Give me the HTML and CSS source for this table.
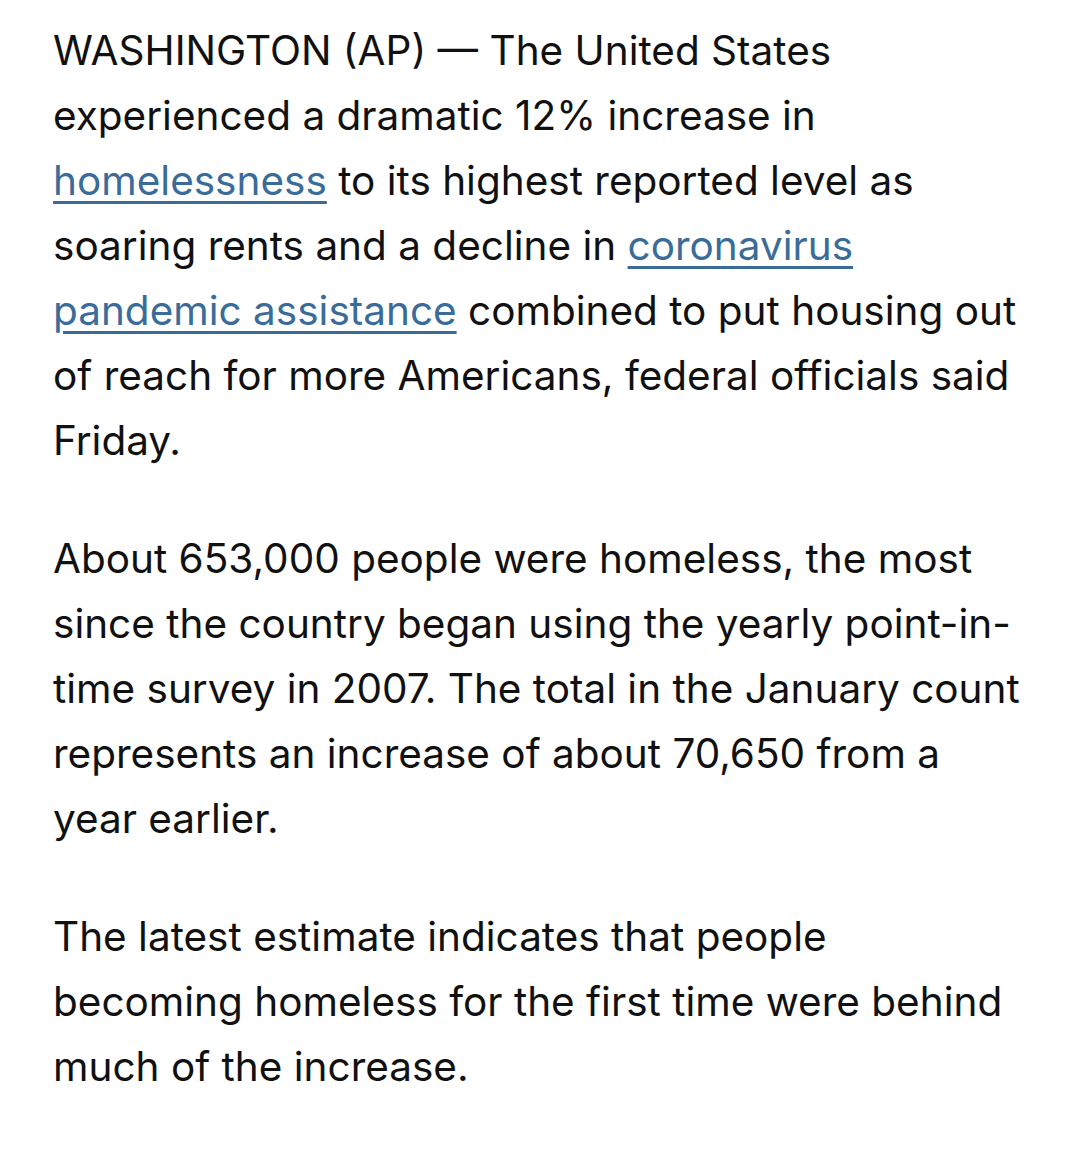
FILE: index.html
```html
<!DOCTYPE html>
<html lang="en">
<head>
<meta charset="utf-8">
<title>AP article</title>
<link rel="stylesheet" href="styles.css">
</head>
<body>
<article class="story">
<p class="para">WASHINGTON (AP) — The United States<br>experienced a dramatic 12% increase in<br><a class="link" href="#">homelessness</a> to its highest reported level as<br>soaring rents and a decline in <a class="link" href="#">coronavirus<br>pandemic assistance</a> combined to put housing out<br>of reach for more Americans, federal officials said<br>Friday.</p>
<p class="para">About 653,000 people were homeless, the most<br>since the country began using the yearly point-in-<br>time survey in 2007. The total in the January count<br>represents an increase of about 70,650 from a<br>year earlier.</p>
<p class="para">The latest estimate indicates that people<br>becoming homeless for the first time were behind<br>much of the increase.</p>
</article>
</body>
</html>
```

FILE: styles.css
```css
html, body {
  margin: 0;
  padding: 0;
  background: #ffffff;
}
.story {
  padding: 18px 0 0 53px;
}
.para {
  margin: 0 0 53px 0;
  font-family: Inter, "Noto Sans", sans-serif;
  font-size: 40.5px;
  line-height: 65px;
  color: #111111;
  white-space: nowrap;
}
.link {
  color: #3a6c9a;
  text-decoration: underline;
  text-decoration-thickness: 3px;
  text-underline-offset: 6px;
}
```
